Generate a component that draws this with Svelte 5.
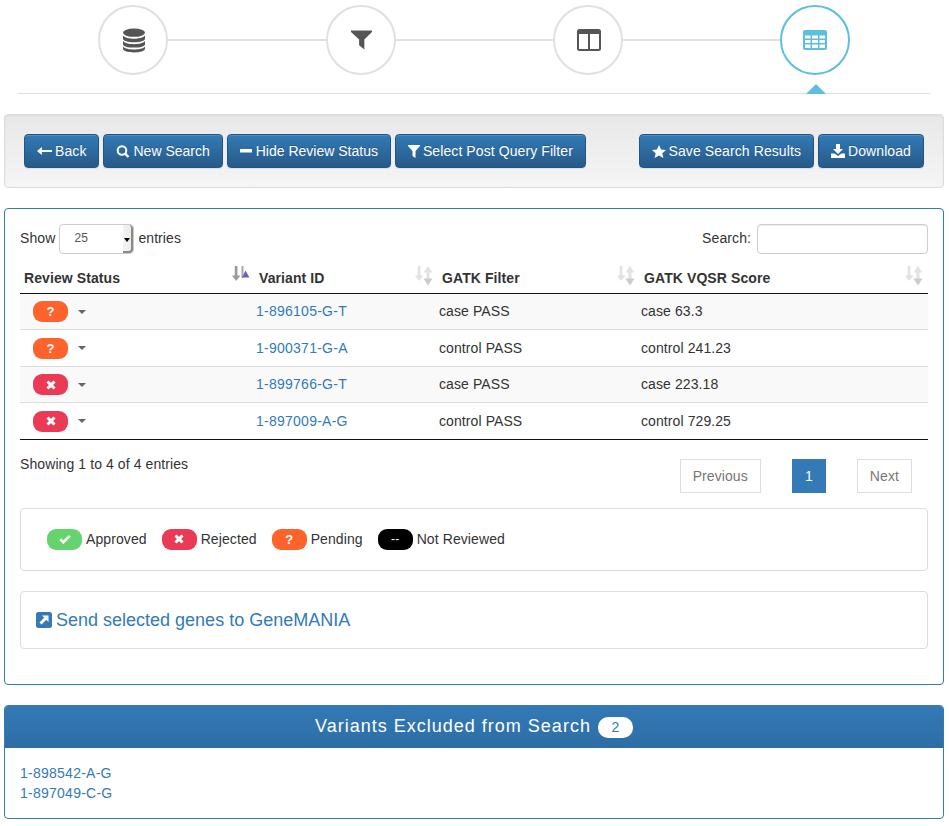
<script>
  const rows = [
    { status: 'pending', id: '1-896105-G-T', filter: 'case PASS', score: 'case 63.3' },
    { status: 'pending', id: '1-900371-G-A', filter: 'control PASS', score: 'control 241.23' },
    { status: 'rejected', id: '1-899766-G-T', filter: 'case PASS', score: 'case 223.18' },
    { status: 'rejected', id: '1-897009-A-G', filter: 'control PASS', score: 'control 729.25' }
  ];
  const columns = ['Review Status', 'Variant ID', 'GATK Filter', 'GATK VQSR Score'];
  const excluded = ['1-898542-A-G', '1-897049-C-G'];
</script>

{#snippet mark(kind)}
  {#if kind === 'approved'}
    <span class="pill approved">
      <svg width="12" height="10" viewBox="0 0 12 10"><path d="M1.200 5.200 4.400 8.200 10.800 1.800" fill="none" stroke="#fff" stroke-width="2.600"/></svg>
    </span>
  {:else if kind === 'rejected'}
    <span class="pill rejected">
      <svg width="10" height="10" viewBox="0 0 10 10"><path d="M1.500 1.500 8.500 8.500M8.500 1.500 1.500 8.500" fill="none" stroke="#fff" stroke-width="3"/></svg>
    </span>
  {:else if kind === 'pending'}
    <span class="pill pending"><b>?</b></span>
  {:else}
    <span class="pill none">--</span>
  {/if}
{/snippet}

{#snippet sorter(active)}
  <svg class="sorter" width="18" height="21" viewBox="0 0 18 21">
    <path d="M2.800 1h2.600v9.500H8.500L4.100 16 0 10.500h2.800z" fill={active ? '#999' : '#e2e2e2'}/>
    {#if active}
      <rect x="9.500" y="1" width="2" height="12" fill="#aaa"/>
      <path d="M13.500 5.500 17.500 12.500H10z" fill="#6a62c4"/>
    {:else}
      <path d="M13 1l4.500 6.500h-9z" fill="#e2e2e2"/>
      <rect x="11.500" y="7" width="3" height="7" fill="#e2e2e2"/>
      <path d="M13 20.500 17.500 13.500h-9z" fill="#ccc"/>
    {/if}
  </svg>
{/snippet}

<div class="page">
  <div class="wizard">
    <div class="step">
      <svg class="db" width="22" height="25" viewBox="0 0 24 26" fill="#555">
        <ellipse cx="12" cy="4.500" rx="12" ry="4.500"/>
        <path d="M0 7.500c2 2.600 7 3.500 12 3.500s10-.9 12-3.500V11c0 2.500-5.500 3.800-12 3.800S0 13.500 0 11z"/>
        <path d="M0 13.600c2 2.600 7 3.400 12 3.400s10-.8 12-3.400V17c0 2.500-5.500 3.700-12 3.700S0 19.500 0 17z"/>
        <path d="M0 19.500c2 2.500 7 3.300 12 3.300s10-.8 12-3.300v2.200c0 2.700-5.500 4.300-12 4.300S0 24.400 0 21.700z"/>
      </svg>
    </div>
    <div class="link"></div>
    <div class="step">
      <svg width="21" height="20" viewBox="0 0 22 20" fill="#555"><path d="M0 0h22v1.500L14 9.500V20L8.500 15.500V9.500L0 1.500z"/></svg>
    </div>
    <div class="link"></div>
    <div class="step">
      <svg class="cols" width="24" height="22" viewBox="0 0 24 22"><path d="M2.500 0h19A2.500 2.500 0 0 1 24 2.500v17a2.500 2.500 0 0 1-2.500 2.500h-19A2.500 2.500 0 0 1 0 19.500v-17A2.500 2.500 0 0 1 2.500 0zM2 5v15h9V5zm11 0v15h9V5z" fill="#555" fill-rule="evenodd"/></svg>
    </div>
    <div class="link"></div>
    <div class="step current">
      <svg width="24" height="20" viewBox="0 0 24 20"><path d="M2 0h20a2 2 0 0 1 2 2v16a2 2 0 0 1-2 2H2a2 2 0 0 1-2-2V2a2 2 0 0 1 2-2zm0 5.500v3h5.500v-3zm7 0v3h6v-3zm7.500 0v3H22v-3zM2 10v3h5.500v-3zm7 0v3h6v-3zm7.500 0v3H22v-3zM2 14.500V18h5.500v-3.500zm7 0V18h6v-3.500zm7.500 0V18H22v-3.500z" fill="#5bc0de" fill-rule="evenodd"/></svg>
    </div>
  </div>
  <div class="rule"><span class="tip"></span></div>

  <div class="well">
    <div class="group">
      <button class="btn"><svg width="15" height="10" viewBox="0 0 14 10" preserveAspectRatio="none"><path d="M0 5l4.500-4v3H14v2H4.500v3z" fill="#fff"/></svg>Back</button>
      <button class="btn tight"><svg width="14" height="13" viewBox="0 0 13 13"><circle cx="5.500" cy="5.500" r="4.300" fill="none" stroke="#fff" stroke-width="2"/><path d="M8.500 8.500 12 12" stroke="#fff" stroke-width="2.400"/></svg>New Search</button>
      <button class="btn tight"><svg width="13" height="4" viewBox="0 0 13 4"><rect width="12" height="3.500" rx=".5" fill="#fff"/></svg>Hide Review Status</button>
      <button class="btn"><svg width="12" height="13" viewBox="0 0 12 13"><path d="M0 0h12v1L7.500 6v7L4.500 11V6L0 1z" fill="#fff"/></svg>Select Post Query Filter</button>
    </div>
    <div class="group">
      <button class="btn"><svg width="14" height="13" viewBox="0 0 14 13"><path d="M7 0l2 4.500 5 .5-3.700 3.200L11.400 13 7 10.500 2.600 13l1.100-4.800L0 5l5-.5z" fill="#fff"/></svg>Save Search Results</button>
      <button class="btn"><svg width="14" height="14" viewBox="0 0 14 14"><path d="M5 0h4v5h3L7 10 2 5h3z" fill="#fff"/><path d="M0 9.500h3.500L7 12l3.500-2.500H14V14H0z" fill="#fff"/></svg>Download</button>
    </div>
  </div>

  <div class="panel main">
    <div class="controls">
      <label class="show">Show
        <span class="select"><span>25</span><i></i></span>
        entries</label>
      <label class="search">Search: <input type="text" /></label>
    </div>

    <table>
      <thead>
        <tr>
          {#each columns as col, i}
            <th>{col}{@render sorter(i === 0)}</th>
          {/each}
        </tr>
      </thead>
      <tbody>
        {#each rows as row}
          <tr>
            <td class="status">{@render mark(row.status)}<i class="caret"></i></td>
            <td class="vid"><a href="#top">{row.id}</a></td>
            <td>{row.filter}</td>
            <td>{row.score}</td>
          </tr>
        {/each}
      </tbody>
    </table>

    <div class="footer">
      <div class="info">Showing 1 to 4 of 4 entries</div>
      <div class="pager">
        <span class="pg">Previous</span>
        <span class="pg active">1</span>
        <span class="pg">Next</span>
      </div>
    </div>

    <div class="box legend">
      <span class="item">{@render mark('approved')} Approved</span>
      <span class="item">{@render mark('rejected')} Rejected</span>
      <span class="item">{@render mark('pending')} Pending</span>
      <span class="item">{@render mark('none')} Not Reviewed</span>
    </div>

    <div class="box send">
      <svg width="16" height="16" viewBox="0 0 16 16"><rect width="16" height="16" rx="2.500" fill="#337ab7"/><path d="M6 3.500h6.500V10L10.300 7.800 5.500 12.500 3.500 10.500 8.200 5.700z" fill="#fff"/></svg>
      <a href="#top">Send selected genes to GeneMANIA</a>
    </div>
  </div>

  <div class="panel excluded">
    <div class="heading">Variants Excluded from Search <span class="badge">2</span></div>
    <div class="list">
      {#each excluded as id}
        <a href="#top">{id}</a>
      {/each}
    </div>
  </div>
</div>

<style>
  :global(body) {
    margin: 0;
    background: #fff;
    font-family: "Liberation Sans", Arial, sans-serif;
    font-size: 14px;
    line-height: 20px;
    letter-spacing: .09px;
    color: #333;
  }
  a { color: #337ab7; text-decoration: none; }

  .page { padding: 0 5px 0 4px; width: 940px; }

  .wizard {
    display: flex;
    align-items: center;
    margin: 0 94px;
    padding-top: 5px;
    height: 70px;
  }
  .step {
    box-sizing: border-box;
    flex: none;
    width: 70px;
    height: 70px;
    border: 2px solid #e0e0e0;
    border-radius: 50%;
    display: flex;
    align-items: center;
    justify-content: center;
    background: #fff;
  }
  .step.current { border-color: #5bc0de; margin-top: -1px; }
  .db, .cols { margin-left: 2px; }
  .link { flex: 1; height: 2px; background: #e0e0e0; }
  .link:nth-child(2) { flex: none; width: 158px; }

  .rule {
    position: relative;
    margin: 18px 14px 0;
    height: 1px;
    background: #e0e0e0;
  }
  .tip {
    position: absolute;
    left: 788px;
    top: -9px;
    border: 10px solid transparent;
    border-top: 0;
    border-bottom-color: #5bc0de;
  }

  .well {
    box-sizing: border-box;
    margin-top: 20px;
    height: 74px;
    padding: 19px;
    display: flex;
    justify-content: space-between;
    border: 1px solid #dcdcdc;
    border-radius: 4px;
    background: linear-gradient(to bottom, #e8e8e8, #f5f5f5);
    box-shadow: inset 0 1px 3px rgba(0, 0, 0, .05);
  }
  .group { display: flex; gap: 4px; }
  .btn {
    box-sizing: border-box;
    display: inline-flex;
    align-items: center;
    gap: 3px;
    height: 34px;
    padding: 6px 12px;
    font: inherit;
    letter-spacing: inherit;
    color: #fff;
    white-space: nowrap;
    border: 1px solid #245580;
    border-radius: 4px;
    background: linear-gradient(to bottom, #337ab7, #265a88);
    text-shadow: 0 -1px 0 rgba(0, 0, 0, .2);
    box-shadow: inset 0 1px 0 rgba(255, 255, 255, .15), 0 1px 1px rgba(0, 0, 0, .075);
  }
  .btn.tight { letter-spacing: 0; }

  .panel {
    box-sizing: border-box;
    border: 1px solid #337ab7;
    border-radius: 4px;
    background: #fff;
  }
  .main { margin-top: 20px; height: 477px; padding: 15px; }

  .controls {
    display: flex;
    justify-content: space-between;
    height: 30px;
  }
  .controls label { display: flex; align-items: flex-start; gap: 4px; line-height: 28px; }
  .select {
    box-sizing: border-box;
    position: relative;
    width: 75px;
    height: 30px;
    border: 1px solid #ccc;
    border-radius: 4px;
    padding: 0 14px;
    font-size: 12px;
    line-height: 26px;
    color: #555;
  }
  .select i {
    position: absolute;
    right: 0;
    top: 0;
    bottom: 0;
    width: 8px;
    background: linear-gradient(to right, #f4f4f4, #ececec);
    border-right: 2px solid #888;
    border-bottom: 2px solid #888;
    border-radius: 0 4px 4px 0;
  }
  .select i::after {
    content: '';
    position: absolute;
    left: 1px;
    top: 13px;
    border: 3px solid transparent;
    border-bottom: 0;
    border-top: 4px solid #000;
  }
  input {
    box-sizing: border-box;
    width: 171px;
    height: 30px;
    margin-left: 2px;
    border: 1px solid #ccc;
    border-radius: 4px;
    box-shadow: inset 0 1px 1px rgba(0, 0, 0, .075);
  }

  table {
    width: 908px;
    margin-top: 9px;
    border-collapse: collapse;
    table-layout: fixed;
    border-bottom: 1px solid #111;
  }
  th {
    position: relative;
    box-sizing: border-box;
    height: 30px;
    padding: 5px 4px 4px;
    text-align: left;
    border-bottom: 1px solid #111;
    font-weight: bold;
  }
  th:nth-child(1) { width: 235px; }
  th:nth-child(2) { width: 183px; }
  th:nth-child(3) { width: 202px; }
  .sorter { position: absolute; right: 5px; top: 2px; }
  td {
    height: 36.500px;
    box-sizing: border-box;
    padding: 0 1px;
    border-top: 1px solid #ddd;
  }
  tbody tr:first-child td { border-top: 0; }
  tbody tr:nth-child(odd) { background: #f9f9f9; }
  .vid { letter-spacing: .25px; }
  .status { padding-left: 13px; }
  .status, .status * { vertical-align: middle; }

  .pill {
    box-sizing: border-box;
    display: inline-flex;
    align-items: center;
    justify-content: center;
    width: 35px;
    height: 21px;
    border-radius: 9px;
    color: #fff;
    font-size: 12px;
    line-height: 1;
  }
  .pill b { font-size: 13px; }
  .approved { background: #65d36e; }
  .rejected { background: #eb3a55; }
  .pending { background: #ff632c; }
  .none { background: #000; }
  .caret {
    display: inline-block;
    margin-left: 10px;
    border: 4px solid transparent;
    border-bottom: 0;
    border-top: 4px solid #666;
  }

  .footer {
    display: flex;
    justify-content: space-between;
    margin-top: 14px;
    height: 54px;
  }
  .pager { display: flex; margin-top: 5px; height: 34px; padding-right: 16px; gap: 31px; }
  .pg {
    box-sizing: border-box;
    padding: 6px 12px;
    height: 34px;
    border: 1px solid #ddd;
    color: #777;
    background: #fff;
  }
  .pg.active {
    background: #337ab7;
    border-color: #337ab7;
    color: #fff;
    width: 34px;
    text-align: center;
  }

  .box {
    box-sizing: border-box;
    border: 1px solid #ddd;
    border-radius: 4px;
  }
  .legend {
    height: 63px;
    padding: 0 26px;
    display: flex;
    align-items: center;
    gap: 15px;
  }
  .item { display: inline-flex; align-items: center; gap: 4px; }
  .send {
    margin-top: 20px;
    height: 58px;
    padding: 0 15px;
    display: flex;
    align-items: center;
    gap: 4px;
    font-size: 18px;
    letter-spacing: 0;
  }

  .excluded { margin-top: 20px; height: 114px; overflow: hidden; }
  .heading {
    box-sizing: border-box;
    height: 43px;
    margin: -1px -1px 0;
    padding-top: 11px;
    text-align: center;
    color: #fff;
    font-size: 18px;
    letter-spacing: 1px;
    background: linear-gradient(to bottom, #337ab7, #2e6da4);
  }
  .badge {
    display: inline-block;
    min-width: 35px;
    box-sizing: border-box;
    margin-left: 1px;
    padding: 3px 7px;
    font-size: 14px;
    line-height: 15px;
    letter-spacing: 0;
    color: #337ab7;
    background: #fff;
    border-radius: 10px;
    vertical-align: middle;
  }
  .list { padding: 15px; display: flex; flex-direction: column; letter-spacing: .25px; }
</style>
